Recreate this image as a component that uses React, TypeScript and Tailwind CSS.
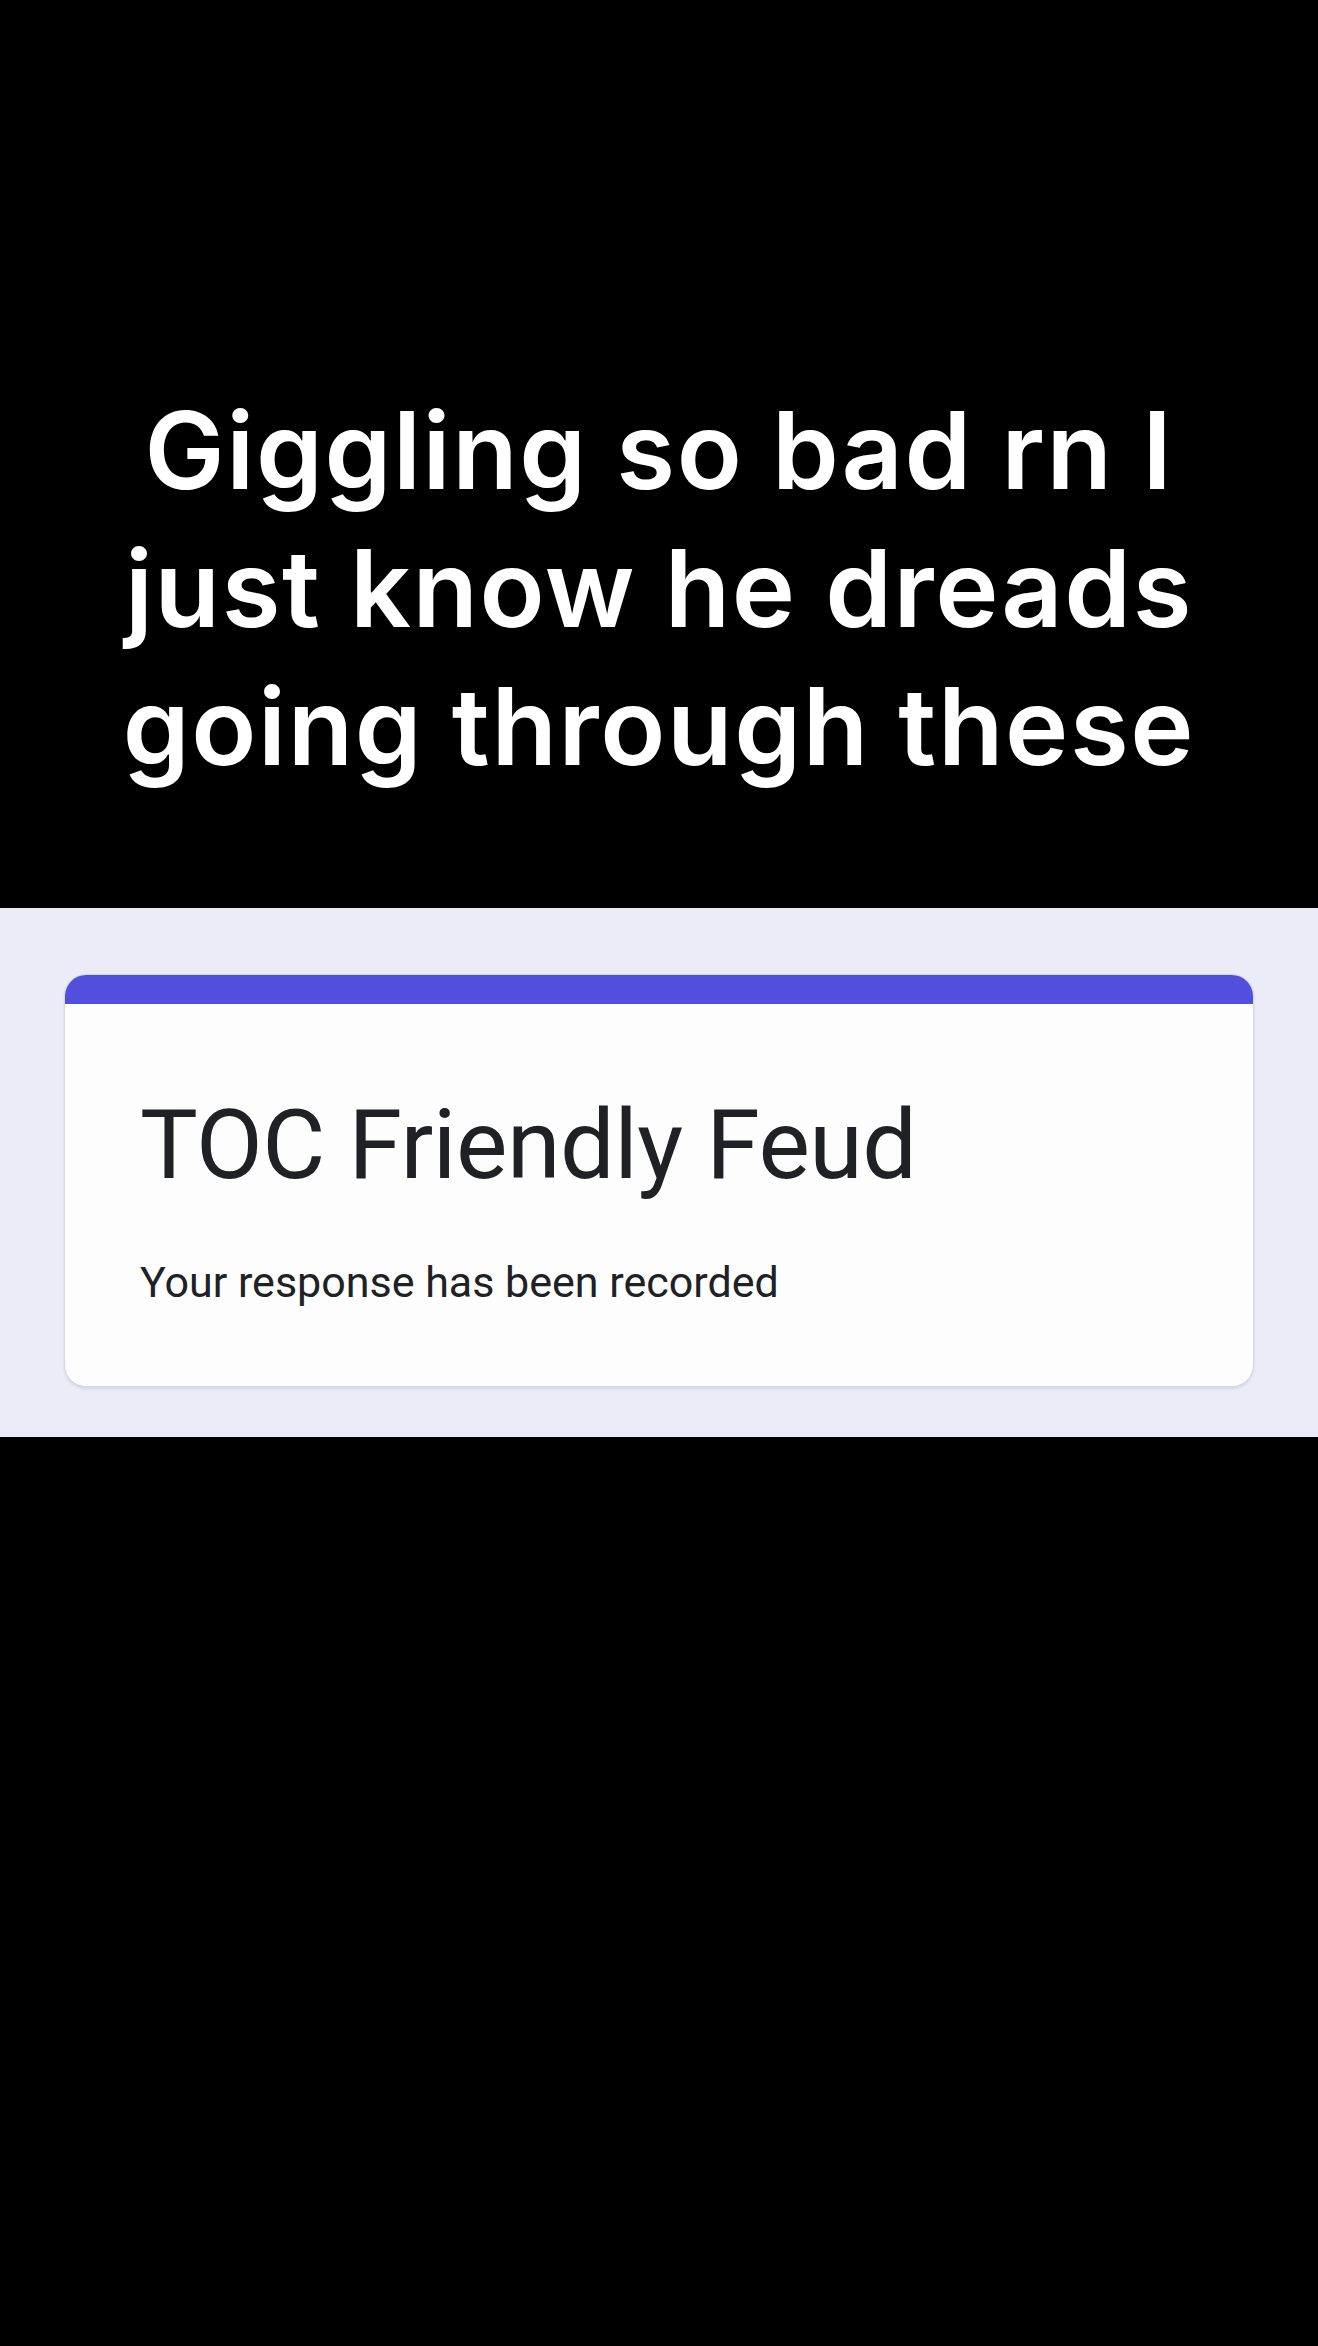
const Caption = () => (
  <div className="h-[908px] pt-[381px] text-center">
    <p className="font-['Inter',sans-serif] font-semibold text-[107px] leading-[138px] tracking-[0.015em] text-white">
      Giggling so bad rn I
      <br />
      just know he dreads
      <br />
      going through these
    </p>
  </div>
);

const FormCard = () => (
  <div className="bg-[#ebecf7] h-[529px] pt-[66px] px-[64px]">
    <div className="rounded-[22px] overflow-hidden bg-[#fdfdfe] border border-[#d6d8e0] shadow-[0_2px_3px_rgba(60,64,67,0.12)] h-[413px]">
      <div className="h-[29px] bg-[#524fdf]" />
      <div className="pl-[75px] pt-[93px] font-['Roboto',sans-serif] text-[#202124]">
        <h1 className="text-[97px] leading-none tracking-[-0.005em]">TOC Friendly Feud</h1>
        <p className="mt-[67px] text-[43px] leading-none">Your response has been recorded</p>
      </div>
    </div>
  </div>
);

export default function App() {
  return (
    <div className="w-[1318px] min-h-[2346px] bg-black">
      <Caption />
      <FormCard />
    </div>
  );
}
